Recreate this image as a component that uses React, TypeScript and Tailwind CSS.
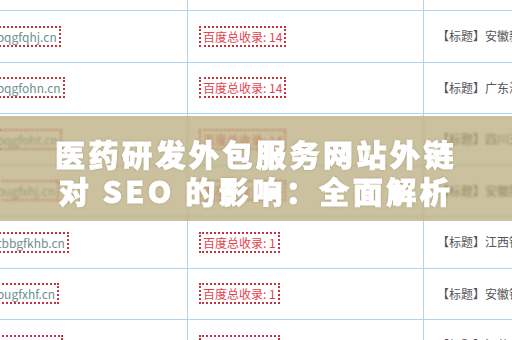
import React from 'react';

interface Row {
  domain: string;
  count: number;
  title: string;
}

// 表格行（左右两边被截掉，只露出一部分）
const ROWS: Row[] = [
  { domain: 'zqbqgfcab.cn', count: 14, title: '【标题】安徽新华医药研发有限公司' },
  { domain: 'zbqgfqhj.cn', count: 14, title: '【标题】安徽新华医药研发有限公司' },
  { domain: 'zbqgfohn.cn', count: 14, title: '【标题】广东海洋生物科技有限公司' },
  { domain: 'zbqgfoht.cn', count: 14, title: '【标题】四川天府医药研发外包服务' },
  { domain: 'zbugfxhj.cn', count: 14, title: '【标题】安徽脉康医药科技有限公司' },
  { domain: 'ctbbgfkhb.cn', count: 1, title: '【标题】江西铜鼓医药研发有限公司' },
  { domain: 'zbugfxhf.cn', count: 1, title: '【标题】安徽铜陵生物科技有限公司' },
  { domain: 'zbugfxqa.cn', count: 1, title: '【标题】江苏南京医药研发有限公司' },
];

const font = { fontFamily: '"Microsoft YaHei", "Noto Sans CJK SC", "Noto Sans", sans-serif' };

export default function App() {
  return (
    <div className="relative w-[512px] h-[340px] overflow-hidden bg-white" style={font}>
      {/* table */}
      <div className="flex flex-col -mt-[40.5px]">
        {ROWS.map((row, i) => (
          <div
            key={i}
            className="grid grid-cols-[188px_236px_1fr] h-[51.5px] border-b border-[#b3d4ec] text-[12px]"
          >
            <div className="flex items-center overflow-hidden border-r border-[#b3d4ec]">
              <span className="-ml-[13px] px-[2px] leading-[17px] border-2 border-dotted border-[#c4343e] text-[#6f9090] whitespace-nowrap">
                {row.domain}
              </span>
            </div>
            <div className="flex items-center pl-[11px] border-r border-[#b3d4ec]">
              <span className="px-[2px] leading-[17px] border-2 border-dotted border-[#c4343e] text-[#e2434e] whitespace-nowrap">
                百度总收录: {row.count}
              </span>
            </div>
            <div className="flex items-center pl-[13px] overflow-hidden">
              <span className="text-[#555555] whitespace-nowrap">{row.title}</span>
            </div>
          </div>
        ))}
      </div>

      {/* title band */}
      <div className="absolute left-0 right-0 top-[116px] h-[105px] bg-[rgba(178,163,112,0.68)] backdrop-blur-[1px] flex flex-col items-center justify-center pt-[6px]">
        <div className="text-white font-black text-[30px] leading-[37px] tracking-[3.5px] [-webkit-text-stroke:1px_white] [text-shadow:0_0_3px_rgba(60,50,20,0.35)] whitespace-nowrap">
          医药研发外包服务网站外链
        </div>
        <div className="text-white font-black text-[30px] leading-[37px] tracking-[3.5px] [-webkit-text-stroke:1px_white] [text-shadow:0_0_3px_rgba(60,50,20,0.35)] whitespace-nowrap">
          对 SEO 的影响：全面解析
        </div>
      </div>
    </div>
  );
}
